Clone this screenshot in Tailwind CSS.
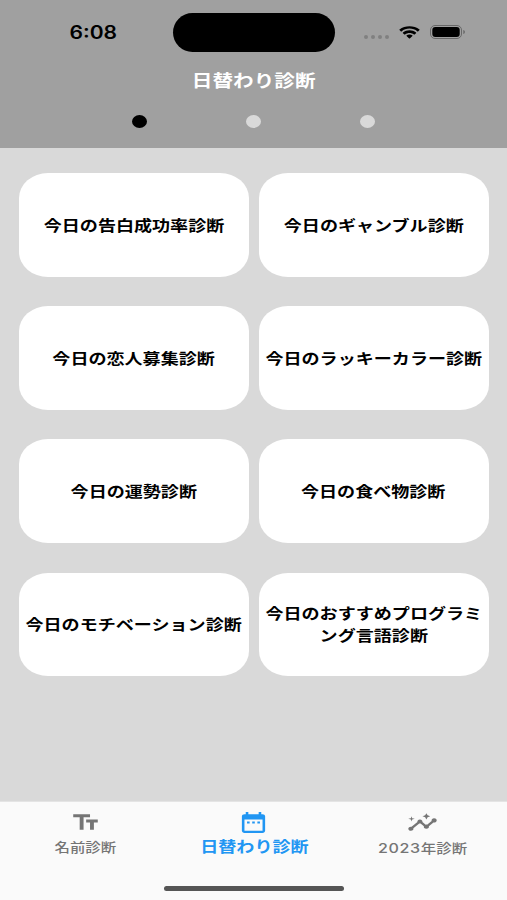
<!DOCTYPE html>
<html lang="ja">
<head>
  <meta charset="UTF-8" />
  <meta name="viewport" content="width=device-width, initial-scale=1.0" />
  <title>日替わり診断</title>
  <script src="https://cdn.jsdelivr.net/npm/@tailwindcss/browser@4"></script>
</head>
<body class="flex flex-col h-screen overflow-hidden bg-[#d9d9d9] font-['Inter','Noto_Sans_CJK_JP',sans-serif] whitespace-nowrap">

  <header class="h-[148px] shrink-0 bg-[#a0a0a0]">
    <!-- status bar -->
    <div class="grid grid-cols-[173px_162px_1fr] pt-[13px]">
      <div class="flex items-center justify-center pl-[14px]">
        <span class="text-[18px] leading-none font-semibold scale-x-[1.17]">6:08</span>
      </div>
      <div class="h-[39px] rounded-full bg-black"></div>
      <div class="flex items-center pl-[29px]">
        <div class="flex gap-[3px] mt-[8px]">
          <span class="w-1 h-1 rounded-full bg-[#808080]"></span>
          <span class="w-1 h-1 rounded-full bg-[#808080]"></span>
          <span class="w-1 h-1 rounded-full bg-[#808080]"></span>
          <span class="w-1 h-1 rounded-full bg-[#808080]"></span>
        </div>
        <svg class="ml-[10px] -mt-px w-[21px] h-[13px]" viewBox="0 0 17 12" preserveAspectRatio="none">
          <path d="M8.5 2.4c2.4 0 4.7.9 6.4 2.6.1.1.3.1.5 0l1.2-1.3c.1-.1.1-.3 0-.5C12.1-.9 4.9-.9.4 3.2c-.1.2-.1.4 0 .5L1.6 5c.2.1.4.1.5 0C3.8 3.3 6.1 2.4 8.5 2.4zM8.5 6.5c1.3 0 2.6.5 3.6 1.4.1.1.4.1.5 0l1.2-1.3c.1-.1.1-.4 0-.5-3-2.8-7.6-2.8-10.6 0-.1.1-.1.4 0 .5l1.2 1.3c.1.1.4.1.5 0 1-.9 2.3-1.4 3.6-1.4zM10.9 9.3c.1-.2.1-.4 0-.5-1.4-1.2-3.4-1.2-4.8 0-.1.1-.1.3 0 .5l2.1 2.2c.1.2.4.2.5 0z" />
        </svg>
        <svg class="ml-[9.5px] -mt-[2px] w-[36px] h-[14px]" viewBox="0 0 36 14" fill="none">
          <rect x="0.5" y="0.5" width="31" height="13" rx="4.5" stroke="#686868" />
          <rect x="2.3" y="2" width="27.4" height="10" rx="3" fill="#000" />
          <path d="M33.3 5v4c1-.4 1.6-1.1 1.6-2s-.6-1.6-1.6-2z" fill="#686868" />
        </svg>
      </div>
    </div>

    <h1 class="flex justify-center mt-[17px] text-white text-[16.9px] leading-6 font-bold"><span class="scale-x-[1.22]">日替わり診断</span></h1>

    <!-- page indicator -->
    <div class="flex justify-center gap-[99px] mt-[22px]">
      <span class="w-[15px] h-[13px] rounded-[50%] bg-black"></span>
      <span class="w-[15px] h-[13px] rounded-[50%] bg-[#d9d9d9]"></span>
      <span class="w-[15px] h-[13px] rounded-[50%] bg-[#d9d9d9]"></span>
    </div>
  </header>

  <main class="flex-1 px-[18.5px] pt-[25px]">
    <div class="grid grid-cols-2 auto-rows-[103.5px] gap-x-[10px] gap-y-[29.7px] text-center text-black text-[14.8px] leading-[22px] font-bold">
      <button class="flex items-center justify-center pt-[2px] bg-white rounded-[29px/25px]"><span class="scale-x-[1.22]">今日の告白成功率診断</span></button>
      <button class="flex items-center justify-center pt-[2px] bg-white rounded-[29px/25px]"><span class="scale-x-[1.22]">今日のギャンブル診断</span></button>
      <button class="flex items-center justify-center pt-[2px] bg-white rounded-[29px/25px]"><span class="scale-x-[1.22]">今日の恋人募集診断</span></button>
      <button class="flex items-center justify-center pt-[2px] bg-white rounded-[29px/25px]"><span class="scale-x-[1.22]">今日のラッキーカラー診断</span></button>
      <button class="flex items-center justify-center pt-px bg-white rounded-[29px/25px]"><span class="scale-x-[1.22]">今日の運勢診断</span></button>
      <button class="flex items-center justify-center pt-px bg-white rounded-[29px/25px]"><span class="scale-x-[1.22]">今日の食べ物診断</span></button>
      <button class="flex items-center justify-center pt-px bg-white rounded-[29px/25px]"><span class="scale-x-[1.22]">今日のモチベーション診断</span></button>
      <button class="flex items-center justify-center pt-px bg-white rounded-[29px/25px]"><span class="scale-x-[1.22]">今日のおすすめプログラミ<br />ング言語診断</span></button>
    </div>
  </main>

  <footer class="h-[99px] shrink-0 bg-[#fafafa] border-t border-[#e4e4e4]">
    <nav class="grid grid-cols-3 h-[84px] pt-[7.5px] pl-px text-[#757575] text-[12.7px] font-medium">
      <a class="flex flex-col items-center">
        <svg class="w-[31px] h-[25px] fill-current" viewBox="0 0 24 24" preserveAspectRatio="none">
          <path d="M2.5 4v3h5v12h3V7h5V4h-13zm19 5h-9v3h3v7h3v-7h3V9z" />
        </svg>
        <span class="mt-[3.5px] leading-5 scale-x-[1.22]">名前診断</span>
      </a>
      <a class="flex flex-col items-center text-[#2196f3]">
        <svg class="w-[31px] h-[25px] fill-current" viewBox="0 0 24 24" preserveAspectRatio="none">
          <path d="M9 11H7v2h2v-2zm4 0h-2v2h2v-2zm4 0h-2v2h2v-2zm2-7h-1V2h-2v2H8V2H6v2H5c-1.11 0-1.99.9-1.99 2L3 20c0 1.1.89 2 2 2h14c1.1 0 2-.9 2-2V6c0-1.1-.9-2-2-2zm0 16H5V9h14v11z" />
        </svg>
        <span class="mt-[1.5px] text-[14.8px] leading-[22px] font-bold scale-x-[1.22]">日替わり診断</span>
      </a>
      <a class="flex flex-col items-center">
        <svg class="w-[31px] h-[25px] fill-current" viewBox="0 0 24 24" preserveAspectRatio="none">
          <path d="M21 8c-1.45 0-2.26 1.44-1.93 2.51l-3.55 3.56c-.3-.09-.74-.09-1.04 0l-2.55-2.55C12.27 10.45 11.46 9 10 9c-1.45 0-2.27 1.44-1.93 2.52l-4.56 4.55C2.44 15.74 1 16.55 1 18c0 1.1.9 2 2 2 1.45 0 2.26-1.44 1.93-2.51l4.55-4.56c.3.09.74.09 1.04 0l2.55 2.55C12.73 16.55 13.54 18 15 18c1.45 0 2.27-1.44 1.93-2.52l3.56-3.55C21.56 12.26 23 11.45 23 10c0-1.1-.9-2-2-2z" />
          <path d="M15 9l.94-2.07L18 6l-2.06-.93L15 3l-.92 2.07L12 6l2.08.93zM3.5 11L4 9l2-.5L4 8l-.5-2L3 8l-2 .5L3 9z" />
        </svg>
        <span class="mt-[3.5px] leading-5 scale-x-[1.22]"><span class="text-[13.2px] tracking-[0.5px]">2023</span>年診断</span>
      </a>
    </nav>
    <div class="mx-auto w-[180px] h-[5px] rounded-full bg-[#555]"></div>
  </footer>

</body>
</html>
